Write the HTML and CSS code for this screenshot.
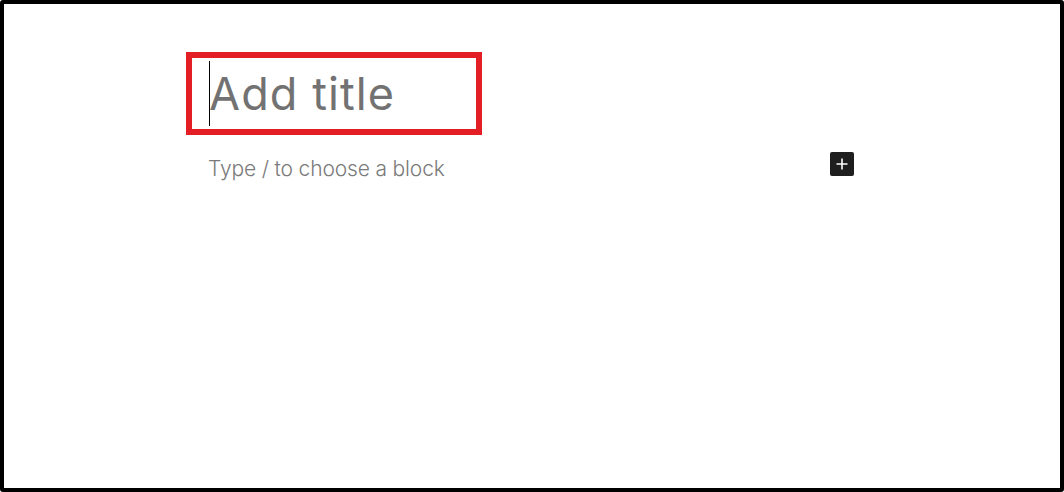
FILE: index.html
```html
<!DOCTYPE html>
<html lang="en">
<head>
<meta charset="utf-8">
<title>Add title</title>
<link rel="stylesheet" href="styles.css">
</head>
<body>
<div class="frame">
  <div class="editor">
    <div class="title-box">
      <span class="cursor"></span>
      <span class="title">Add title</span>
    </div>
    <div class="block-row">
      <span class="placeholder">Type / to choose a block</span>
      <button class="add-btn" aria-label="Add block">
        <svg width="24" height="24" viewBox="0 0 24 24"><path d="M12 6.5v11M6.5 12h11" stroke="#fff" stroke-width="1.6" fill="none"/></svg>
      </button>
    </div>
  </div>
</div>
</body>
</html>
```

FILE: styles.css
```css
* { box-sizing: border-box; }
html, body { margin: 0; padding: 0; background: #fff; }
.frame {
  width: 1064px;
  height: 492px;
  border: 4px solid #000;
  border-radius: 3px;
  background: #fff;
  font-family: Inter, "Noto Sans", sans-serif;
}
.editor {
  display: flex;
  flex-direction: column;
  align-items: flex-start;
  padding: 48px 0 0 182px;
}
.title-box {
  width: 296px;
  height: 83px;
  border: 6px solid #e31e24;
  display: flex;
  align-items: center;
  padding-left: 17px;
}
.cursor {
  width: 1px;
  height: 65px;
  background: #000;
  flex: none;
}
.title {
  font-size: 45px;
  line-height: 63px;
  font-weight: 400;
  color: #727272;
  letter-spacing: 1.1px;
  margin-left: -1px;
}
.block-row {
  margin: 18px 0 0 22px;
  width: 646px;
  display: flex;
  justify-content: space-between;
  align-items: flex-start;
}
.placeholder {
  font-size: 21px;
  line-height: 32px;
  font-weight: 300;
  color: #7a7a7a;
  letter-spacing: -0.15px;
}
.add-btn {
  width: 24px;
  height: 24px;
  margin-top: -1px;
  border: 0;
  padding: 0;
  border-radius: 2px;
  background: #1e1e1e;
  display: flex;
  align-items: center;
  justify-content: center;
}
.add-btn svg { display: block; }
```
